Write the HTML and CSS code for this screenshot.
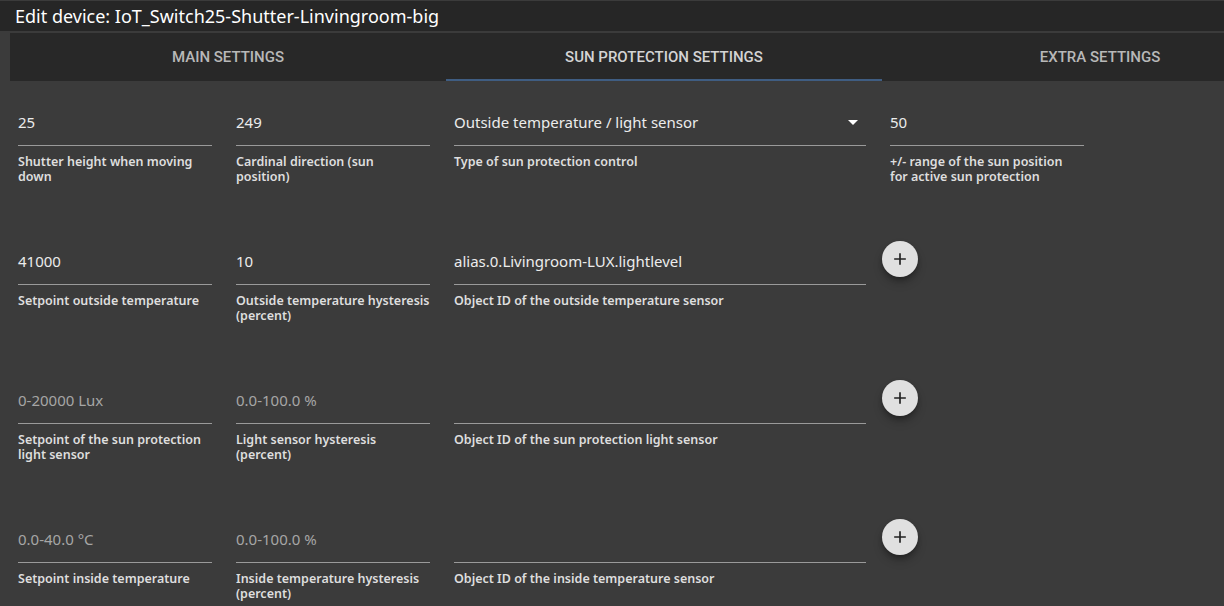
FILE: index.html
```html
<!DOCTYPE html>
<html>
<head>
<meta charset="utf-8">
<link rel="stylesheet" href="styles.css">
</head>
<body>
<div class="titlebar">Edit device: IoT_Switch25-Shutter-Linvingroom-big</div>
<div class="tabs">
  <div class="tab">Main settings</div>
  <div class="tab active">Sun protection settings</div>
  <div class="tab">Extra settings</div>
</div>
<div class="content">
  <div class="grid">
    <div class="field"><div class="value">25</div><div class="label">Shutter height when moving down</div></div>
    <div class="field"><div class="value">249</div><div class="label">Cardinal direction (sun position)</div></div>
    <div class="field span2"><div class="value select">Outside temperature / light sensor<span class="arrow"></span></div><div class="label">Type of sun protection control</div></div>
    <div class="field"><div class="value">50</div><div class="label narrow">+/- range of the sun position for active sun protection</div></div>

    <div class="field"><div class="value">41000</div><div class="label">Setpoint outside temperature</div></div>
    <div class="field"><div class="value">10</div><div class="label">Outside temperature hysteresis (percent)</div></div>
    <div class="field span2"><div class="value">alias.0.Livingroom-LUX.lightlevel</div><div class="label">Object ID of the outside temperature sensor</div></div>
    <div class="addcell"><button class="add"><svg viewBox="0 0 24 24" width="20" height="20"><path d="M19 13h-6v6h-2v-6H5v-2h6V5h2v6h6v2z" fill="#222"/></svg></button></div>

    <div class="field"><div class="value ph">0-20000 Lux</div><div class="label">Setpoint of the sun protection light sensor</div></div>
    <div class="field"><div class="value ph">0.0-100.0 %</div><div class="label">Light sensor hysteresis (percent)</div></div>
    <div class="field span2"><div class="value"></div><div class="label">Object ID of the sun protection light sensor</div></div>
    <div class="addcell"><button class="add"><svg viewBox="0 0 24 24" width="20" height="20"><path d="M19 13h-6v6h-2v-6H5v-2h6V5h2v6h6v2z" fill="#222"/></svg></button></div>

    <div class="field"><div class="value ph">0.0-40.0 °C</div><div class="label">Setpoint inside temperature</div></div>
    <div class="field"><div class="value ph">0.0-100.0 %</div><div class="label">Inside temperature hysteresis (percent)</div></div>
    <div class="field span2"><div class="value"></div><div class="label">Object ID of the inside temperature sensor</div></div>
    <div class="addcell"><button class="add"><svg viewBox="0 0 24 24" width="20" height="20"><path d="M19 13h-6v6h-2v-6H5v-2h6V5h2v6h6v2z" fill="#222"/></svg></button></div>
  </div>
</div>
</body>
</html>
```

FILE: styles.css
```css
html, body {
  margin: 0;
  padding: 0;
  background: #3b3b3b;
  width: 1224px;
  height: 606px;
  overflow: hidden;
  font-family: "Noto Sans", "Open Sans", sans-serif;
}
.titlebar {
  box-sizing: border-box;
  height: 31px;
  margin-top: 1px;
  background: #262626;
  color: #ffffff;
  font-size: 18px;
  line-height: 30px;
  padding-left: 15px;
  border-bottom: 1px solid #3b3b3b;
  white-space: nowrap;
}
.tabs {
  margin-left: 10px;
  margin-top: 1px;
  height: 48px;
  background: #282828;
  display: flex;
  overflow: hidden;
}
.tab {
  flex: 0 0 436px;
  box-sizing: border-box;
  text-align: center;
  line-height: 48px;
  font-family: "Roboto", sans-serif;
  font-weight: 500;
  font-size: 15px;
  text-transform: uppercase;
  color: #b8b8b8;
  border-bottom: 2px solid transparent;
}
.tab.active {
  color: #d4d4d4;
  border-bottom-color: #3f5d82;
}
.content {
  padding: 32px 0 0 18px;
}
.grid {
  display: grid;
  grid-template-columns: repeat(5, 194px);
  grid-auto-rows: 139px;
  column-gap: 24px;
  align-items: start;
}
.field.span2 {
  grid-column: span 2;
}
.value {
  position: relative;
  box-sizing: border-box;
  height: 33px;
  padding-top: 0;
  font-size: 15px;
  line-height: 18px;
  color: #ececec;
  border-bottom: 1px solid #9a9a9a;
  white-space: nowrap;
}
.value.ph {
  color: #a6a6a6;
}
.arrow {
  position: absolute;
  right: 8px;
  top: 7px;
  width: 0;
  height: 0;
  border-left: 5px solid transparent;
  border-right: 5px solid transparent;
  border-top: 5px solid #ffffff;
}
.label {
  margin-top: 8px;
  font-size: 12.5px;
  line-height: 15px;
  font-weight: 600;
  color: #dedede;
}
.label.narrow {
  max-width: 182px;
}
.addcell {
  grid-column: 5;
}
.add {
  margin: -11px 0 0 -8px;
  width: 36px;
  height: 36px;
  border-radius: 50%;
  border: none;
  background: #e0e0e0;
  box-shadow: 0 3px 5px -1px rgba(0,0,0,0.3), 0 6px 10px 0 rgba(0,0,0,0.2);
  display: flex;
  align-items: center;
  justify-content: center;
  padding: 0;
}
```
